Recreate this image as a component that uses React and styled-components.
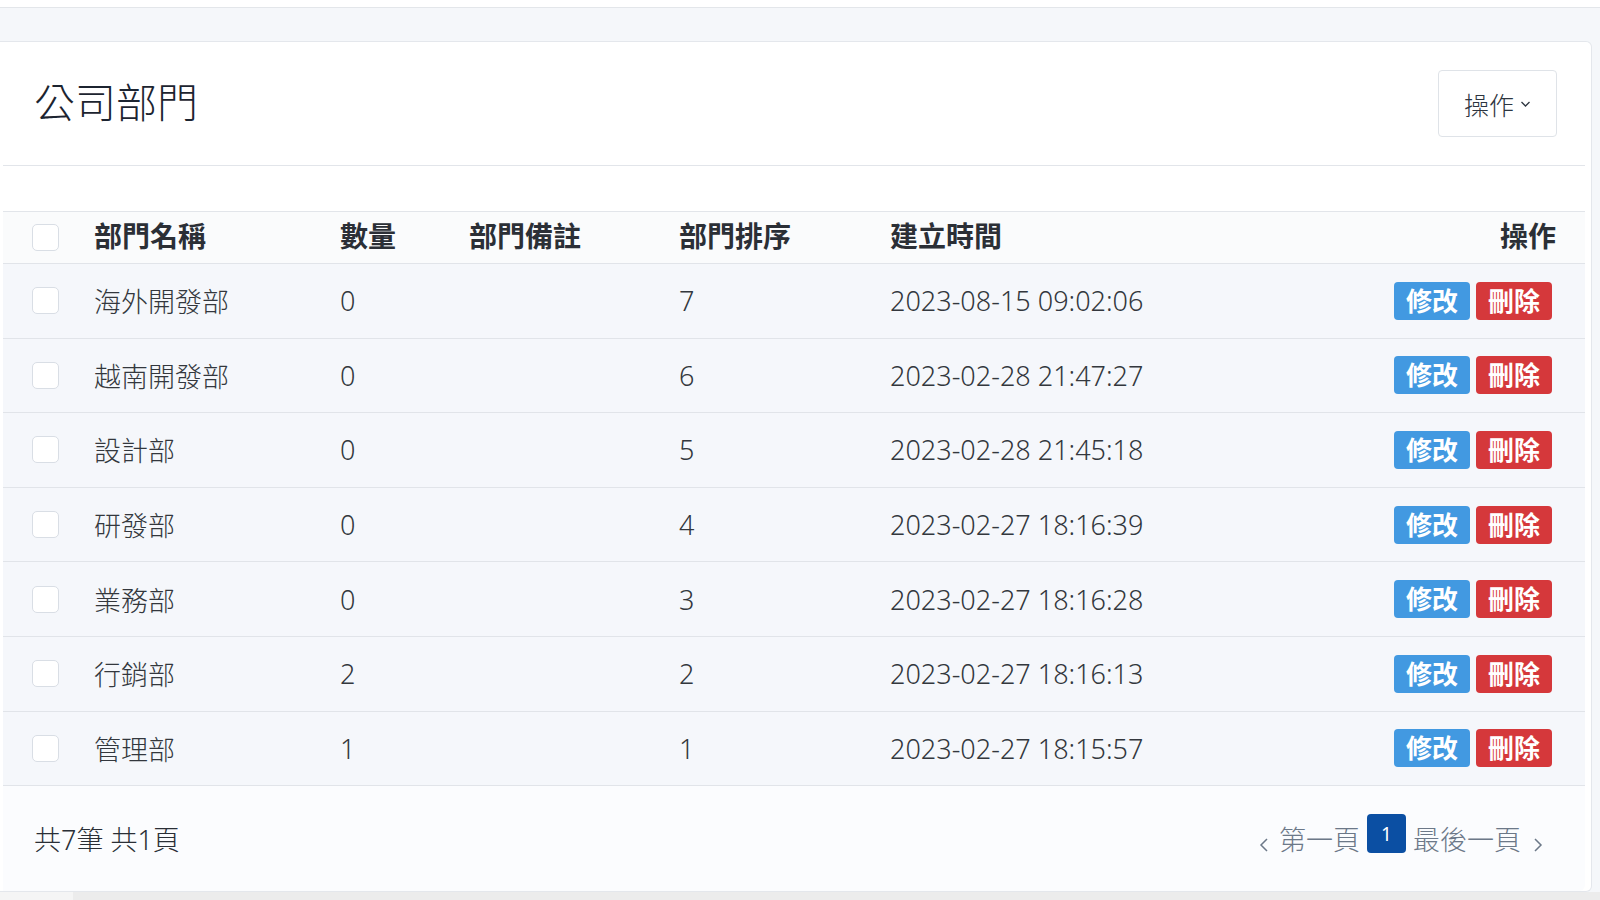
import React from 'react'
import styled, { createGlobalStyle } from 'styled-components'

const GlobalStyle = createGlobalStyle`
    html, body {
        margin: 0;
        padding: 0;
        background: #f5f7fa;
        font-family: "Noto Sans", "Noto Sans CJK TC", sans-serif;
        overflow: hidden;
    }
`

const TopStrip = styled.div`
    height: 7px;
    background: #ffffff;
    border-bottom: 1px solid #e3e6ea;
`

const Page = styled.div`
    padding: 33px 8px 0 0;
`

const Card = styled.div`
    background: #ffffff;
    border: 1px solid #e4e7ec;
    border-left: none;
    border-radius: 0 6px 6px 0;
    padding: 0 6px 0 3px;
    height: 851px;
    display: flex;
    flex-direction: column;
    box-sizing: border-box;
`

const CardHeader = styled.div`
    height: 123px;
    display: flex;
    align-items: center;
    justify-content: space-between;
    padding: 0 28px 0 31px;
    border-bottom: 1px solid #e2e5ea;
`

const Title = styled.h1`
    margin: 0 0 8px 0;
    font-size: 41px;
    font-weight: 300;
    color: #1c2430;
`

const DropButton = styled.button`
    width: 119px;
    height: 67px;
    background: #fff;
    border: 1px solid #dfe3e8;
    border-radius: 4px;
    font-family: inherit;
    font-size: 25px;
    font-weight: 300;
    color: #2d3540;
    display: flex;
    align-items: center;
    justify-content: center;
    gap: 6px;
    padding: 0;
`

const Spacer = styled.div`
    height: 45px;
    border-bottom: 1px solid #e2e5ea;
`

const Row = styled.div`
    display: grid;
    grid-template-columns: 91px 246px 129px 210px 211px 1fr 300px;
    align-items: center;
    height: ${p => (p.head ? '51px' : '73.6px')};
    background: ${p => (p.head ? '#fafbfc' : '#f5f7fb')};
    border-bottom: 1px solid #e1e4e9;
    font-size: ${p => (p.head ? '28px' : '27px')};
    font-weight: ${p => (p.head ? 700 : 300)};
    color: ${p => (p.head ? '#2b2f36' : '#33373d')};
`

const Cell = styled.div`
    white-space: nowrap;
    ${p => p.head && 'margin-top: -5px;'}
    ${p => p.right && `
        display: flex;
        justify-content: flex-end;
        gap: 6px;
        padding-right: ${p.head ? '29px' : '33px'};
    `}
`

const Check = styled.span`
    display: block;
    width: 25px;
    height: 25px;
    margin-left: 29px;
    background: #fff;
    border: 1px solid #d9dee5;
    border-radius: 5px;
`

const ActionButton = styled.button`
    height: 38px;
    padding: 0 12px;
    border: none;
    border-radius: 4px;
    background: ${p => (p.danger ? '#d5383b' : '#4299e1')};
    color: #fff;
    font-family: inherit;
    font-size: 26px;
    font-weight: 700;
    line-height: 38px;
`

const Footer = styled.div`
    flex: 1;
    background: #fbfcfe;
    display: flex;
    align-items: center;
    justify-content: space-between;
    padding: 0 41px 0 31px;
    border-radius: 0 0 6px 0;
`

const Total = styled.span`
    font-size: 27px;
    font-weight: 300;
    color: #2a2f36;
`

const Pager = styled.div`
    display: flex;
    align-items: center;
    gap: 7px;
    font-size: 27px;
    font-weight: 300;
    color: #6c7888;
`

const PageBox = styled.span`
    width: 39px;
    height: 39px;
    border-radius: 4px;
    background: #0b4fa3;
    color: #fff;
    font-size: 19px;
    font-weight: 400;
    display: flex;
    align-items: center;
    justify-content: center;
    margin-bottom: 10px;
`

const Chevron = styled.svg`
    width: 12px;
    height: 18px;
    margin-top: 12px;
    ${p => (p.left ? 'margin-right: 2px;' : 'margin-left: 4px;')}
`

const ScrollTrack = styled.div`
    height: 10px;
    background: #ececec;
    display: flex;
`

const ScrollStart = styled.div`
    width: 73px;
    background: #f5f5f5;
`

const rows = [
    { name: '海外開發部', qty: 0, sort: 7, time: '2023-08-15 09:02:06' },
    { name: '越南開發部', qty: 0, sort: 6, time: '2023-02-28 21:47:27' },
    { name: '設計部', qty: 0, sort: 5, time: '2023-02-28 21:45:18' },
    { name: '研發部', qty: 0, sort: 4, time: '2023-02-27 18:16:39' },
    { name: '業務部', qty: 0, sort: 3, time: '2023-02-27 18:16:28' },
    { name: '行銷部', qty: 2, sort: 2, time: '2023-02-27 18:16:13' },
    { name: '管理部', qty: 1, sort: 1, time: '2023-02-27 18:15:57' },
]

const App = () => {
    return (
        <>
            <GlobalStyle />
            <TopStrip />
            <Page>
                <Card>
                    <CardHeader>
                        <Title>公司部門</Title>
                        <DropButton>
                            操作
                            <svg width="11" height="8" viewBox="0 0 11 8">
                                <path d="M1.5 2 L5.5 6 L9.5 2" fill="none" stroke="#2d3540" strokeWidth="1.3" />
                            </svg>
                        </DropButton>
                    </CardHeader>
                    <Spacer />
                    <Row head>
                        <Cell><Check /></Cell>
                        <Cell head>部門名稱</Cell>
                        <Cell head>數量</Cell>
                        <Cell head>部門備註</Cell>
                        <Cell head>部門排序</Cell>
                        <Cell head>建立時間</Cell>
                        <Cell right head>操作</Cell>
                    </Row>
                    {rows.map(r => (
                        <Row key={r.name}>
                            <Cell><Check /></Cell>
                            <Cell>{r.name}</Cell>
                            <Cell>{r.qty}</Cell>
                            <Cell></Cell>
                            <Cell>{r.sort}</Cell>
                            <Cell>{r.time}</Cell>
                            <Cell right>
                                <ActionButton>修改</ActionButton>
                                <ActionButton danger>刪除</ActionButton>
                            </Cell>
                        </Row>
                    ))}
                    <Footer>
                        <Total>共7筆 共1頁</Total>
                        <Pager>
                            <Chevron left viewBox="0 0 12 18">
                                <path d="M9 3 L3 9 L9 15" fill="none" stroke="#6c7888" strokeWidth="1.5" />
                            </Chevron>
                            <span>第一頁</span>
                            <PageBox>1</PageBox>
                            <span>最後一頁</span>
                            <Chevron viewBox="0 0 12 18">
                                <path d="M3 3 L9 9 L3 15" fill="none" stroke="#6c7888" strokeWidth="1.5" />
                            </Chevron>
                        </Pager>
                    </Footer>
                </Card>
            </Page>
            <ScrollTrack>
                <ScrollStart />
            </ScrollTrack>
        </>
    )
}

export default App
